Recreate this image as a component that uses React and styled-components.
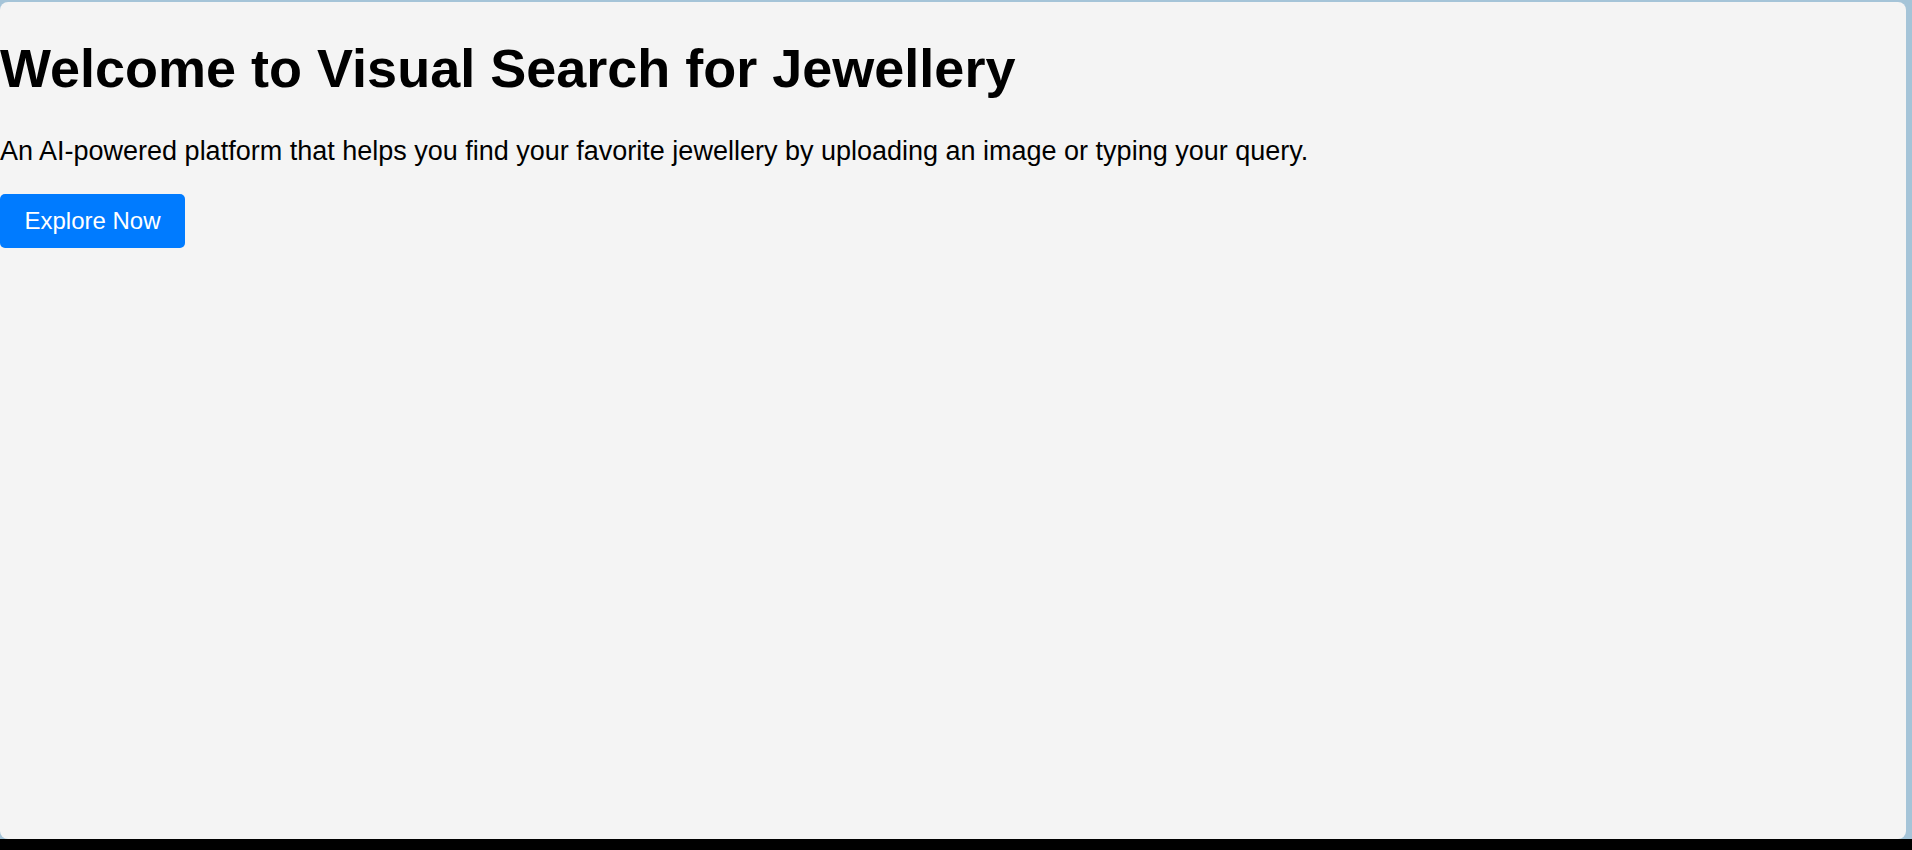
import React from 'react';
import styled, { createGlobalStyle } from 'styled-components';

const GlobalStyle = createGlobalStyle`
  html, body {
    margin: 0;
    padding: 0;
    background: #a5c4d8;
  }
  body {
    font-family: "Liberation Sans", Arial, sans-serif;
  }
`;

const Screen = styled.div`
  height: 850px;
  display: grid;
  grid-template-rows: 1fr 11px;
  padding-top: 2px;
  box-sizing: border-box;
  background: #a5c4d8;
`;

const Panel = styled.main`
  margin-right: 6px;
  background: #f4f4f4;
  border-radius: 8px;
  padding-top: 35px;
  overflow: hidden;
`;

const Title = styled.h1`
  margin: 0 0 37px;
  font-size: 54px;
  font-weight: 700;
  color: #000;
`;

const Lead = styled.p`
  margin: 0 0 27px;
  font-size: 27px;
  color: #000;
`;

const Button = styled.button`
  display: block;
  width: 185px;
  height: 54px;
  padding: 0;
  border: none;
  border-radius: 5px;
  background: #007bff;
  color: #fff;
  font-family: "Liberation Sans", Arial, sans-serif;
  font-size: 24px;
  cursor: pointer;
`;

const Taskbar = styled.div`
  background: #000;
`;

export default function App() {
  return (
    <>
      <GlobalStyle />
      <Screen>
        <Panel>
          <Title>Welcome to Visual Search for Jewellery</Title>
          <Lead>An AI-powered platform that helps you find your favorite jewellery by uploading an image or typing your query.</Lead>
          <Button>Explore Now</Button>
        </Panel>
        <Taskbar />
      </Screen>
    </>
  );
}
